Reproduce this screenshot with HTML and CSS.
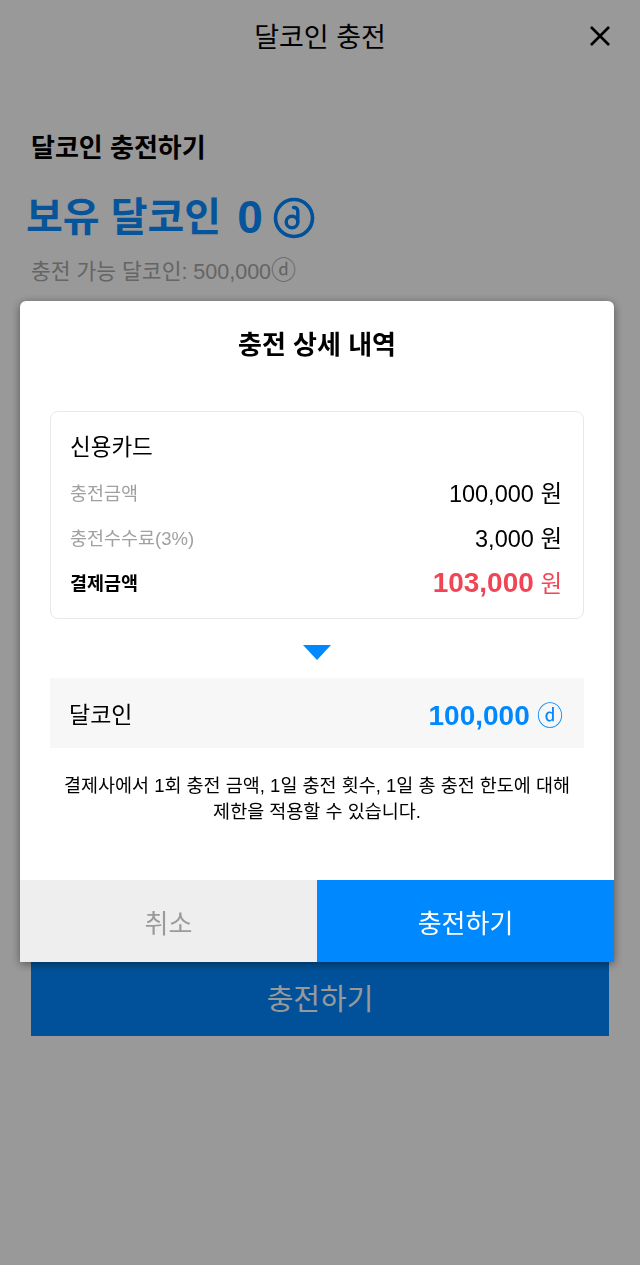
FILE: index.html
```html
<!DOCTYPE html>
<html lang="ko">
  <head>
    <meta charset="UTF-8">
    <meta name="viewport" content="width=device-width, initial-scale=1.0">
    <title>달코인 충전</title>
    <link rel="stylesheet" href="styles.css">
  </head>
  <body>
    <!-- Charge page -->
    <header class="top-bar">
      <h1 class="top-title">달코인 충전</h1>
      <button class="close-btn" aria-label="닫기">
        <svg width="24" height="24" viewBox="0 0 24 24">
          <path d="M3 3 L21 21 M21 3 L3 21" stroke="#000" stroke-width="2.6" fill="none"/>
        </svg>
      </button>
    </header>

    <main class="charge">
      <h2 class="charge-heading">달코인 충전하기</h2>
      <p class="balance">
        보유 달코인 <span class="balance-num">0</span>
        <svg class="coin-icon" width="42" height="42" viewBox="0 0 42 42">
          <circle cx="21" cy="21" r="18.5" stroke="#0088ff" stroke-width="3.6" fill="none"/>
          <circle cx="19" cy="25" r="5.8" stroke="#0088ff" stroke-width="3.4" fill="none"/>
          <path d="M24.8 25 V14.5 Q24.8 10.5 20.5 10.5" stroke="#0088ff" stroke-width="3.4" fill="none" stroke-linecap="round"/>
        </svg>
      </p>
      <p class="limit">충전 가능 달코인: 500,000<span class="unit">ⓓ</span></p>
      <div class="form-space"></div>
      <button class="charge-btn">충전하기</button>
    </main>

    <!-- Detail popup -->
    <div class="dim">
      <div class="modal">
        <h3 class="modal-title">충전 상세 내역</h3>
        <div class="pay-card">
          <p class="pay-method">신용카드</p>
          <div class="pay-row">
            <span class="pay-label">충전금액</span>
            <span class="pay-value">100,000 <span class="won">원</span></span>
          </div>
          <div class="pay-row">
            <span class="pay-label">충전수수료(3%)</span>
            <span class="pay-value">3,000 <span class="won">원</span></span>
          </div>
          <div class="pay-row total">
            <span class="pay-label">결제금액</span>
            <span class="pay-value"><b>103,000</b> <span class="won">원</span></span>
          </div>
        </div>
        <div class="arrow"></div>
        <div class="coin-row">
          <span>달코인</span>
          <span class="coin-amount"><b>100,000</b> ⓓ</span>
        </div>
        <p class="notice">결제사에서 1회 충전 금액, 1일 충전 횟수, 1일 총 충전 한도에 대해 제한을 적용할 수 있습니다.</p>
        <div class="modal-buttons">
          <button class="btn-cancel">취소</button>
          <button class="btn-confirm">충전하기</button>
        </div>
      </div>
    </div>
  </body>
</html>
```

FILE: styles.css
```css
/* General */
body {
  margin: 0;
  font-family: "Liberation Sans", "Noto Sans CJK KR", sans-serif;
  background: #fff;
  color: #000;
  width: 640px;
  min-height: 1265px;
}

button {
  font-family: inherit;
  border: none;
  cursor: pointer;
  padding: 0;
}

p, h1, h2, h3 {
  margin: 0;
}

/* Header */
.top-bar {
  position: relative;
  height: 76px;
  display: flex;
  align-items: center;
  justify-content: center;
}

.top-title {
  font-size: 27px;
  font-weight: 400;
  line-height: 1;
}

.close-btn {
  position: absolute;
  right: 28px;
  top: 24px;
  background: none;
  width: 24px;
  height: 24px;
}

/* Charge section */
.charge {
  padding: 54px 31px 0;
}

.charge-heading {
  font-size: 26px;
  font-weight: 700;
  line-height: 36px;
}

.balance {
  margin: 25px 0 0 -5px;
  font-size: 40px;
  font-weight: 700;
  line-height: 52px;
  color: #0a8cff;
  display: flex;
  align-items: center;
  gap: 10px;
}

.balance-num {
  font-size: 46px;
  margin-left: 6px;
}

.coin-icon {
  margin-top: 2px;
}

.limit {
  margin-top: 12px;
  font-size: 21.5px;
  line-height: 30px;
  color: #a8a8a8;
}

.limit .unit {
  font-size: 25px;
}

.form-space {
  height: 671px;
}

.charge-btn {
  display: block;
  width: 100%;
  height: 78px;
  background: #0088ff;
  color: #fff;
  font-size: 29px;
}

/* Dim layer + popup */
.dim {
  position: fixed;
  inset: 0;
  background: rgba(0, 0, 0, 0.4);
  padding: 301px 0 0 20px;
}

.modal {
  width: 594px;
  background: #fff;
  border-radius: 6px 6px 0 0;
  box-shadow: 0 2px 10px rgba(0, 0, 0, 0.45);
  padding-top: 26px;
  overflow: hidden;
}

.modal-title {
  text-align: center;
  font-size: 26px;
  font-weight: 700;
  line-height: 36px;
}

.pay-card {
  margin: 48px 30px 0;
  border: 1px solid #e8e8e8;
  border-radius: 8px;
  padding: 21px 21px 14px 19px;
}

.pay-method {
  font-size: 22.5px;
  line-height: 30px;
  margin-bottom: 6px;
}

.pay-row {
  height: 45px;
  display: flex;
  align-items: center;
  justify-content: space-between;
}

.pay-label {
  font-size: 18.5px;
  color: #a0a0a0;
}

.pay-value {
  font-size: 23.5px;
}

.total .pay-label {
  color: #000;
  font-weight: 700;
}

.total .pay-value {
  color: #f04555;
}

.total b {
  font-size: 28px;
}

.arrow {
  width: 0;
  height: 0;
  margin: 26px auto 18px;
  border-left: 14px solid transparent;
  border-right: 14px solid transparent;
  border-top: 15px solid #0088ff;
}

.coin-row {
  margin: 0 30px;
  height: 70px;
  padding: 0 21px 0 19px;
  background: #f7f7f7;
  display: flex;
  align-items: center;
  justify-content: space-between;
  font-size: 23px;
}

.coin-amount {
  color: #0088ff;
  font-size: 26px;
}

.coin-amount b {
  font-size: 28px;
}

.notice {
  margin: 25px 30px 55px;
  text-align: center;
  font-size: 18.5px;
  line-height: 26px;
  word-break: keep-all;
}

.modal-buttons {
  display: flex;
  height: 82px;
}

.modal-buttons button {
  flex: 1;
  font-size: 26px;
}

.btn-cancel {
  background: #eeeeee;
  color: #9a9a9a;
}

.btn-confirm {
  background: #0088ff;
  color: #fff;
}
```
